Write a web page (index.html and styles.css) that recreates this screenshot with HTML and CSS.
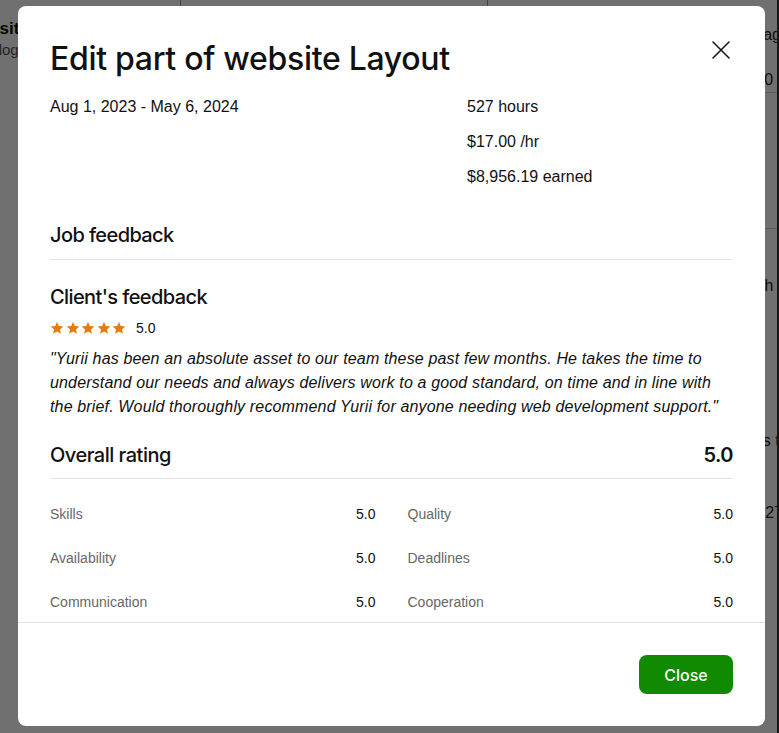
FILE: index.html
```html
<!DOCTYPE html>
<html lang="en">
<head>
<meta charset="utf-8">
<title>Edit part of website Layout</title>
<link rel="stylesheet" href="styles.css">
</head>
<body>
<div class="page">
  <div class="bg-left">
    <div class="bg-top"><span class="bg-tick t1"></span><span class="bg-tick t2"></span></div>
    <div class="bg-title">Website</div>
    <div class="bg-sub">Catalog</div>
  </div>
  <div class="bg-right">
    <div class="bg-item i1">Manage</div>
    <div class="bg-item i2">$0.00</div>
    <div class="bg-rule r1"></div>
    <div class="bg-rule r2"></div>
    <div class="bg-item i3">Each</div>
    <div class="bg-item i4">Hours total</div>
    <div class="bg-item i5">$1,27</div>
  </div>
  <div class="scrollbar"></div>
</div>

<div class="overlay">
  <div class="modal" role="dialog" aria-labelledby="modal-title">
    <div class="modal-body">
      <div class="modal-header">
        <h1 id="modal-title" class="title">Edit part of website Layout</h1>
        <button class="icon-close" aria-label="Close">
          <svg width="18" height="18" viewBox="0 0 18 18" fill="none" stroke="#1a1a1a" stroke-width="1.6" stroke-linecap="round"><path d="M1 1L17 17M17 1L1 17"/></svg>
        </button>
      </div>

      <div class="stats">
        <div class="dates">Aug 1, 2023 - May 6, 2024</div>
        <div class="figures">
          <div>527 hours</div>
          <div>$17.00 /hr</div>
          <div>$8,956.19 earned</div>
        </div>
      </div>

      <h2 class="section-title job divided">Job feedback</h2>

      <h3 class="section-title client">Client's feedback</h3>
      <div class="stars-row">
        <div class="stars">
          <svg width="14" height="14" viewBox="0 0 24 24"><path fill="#e8790f" d="M12 1.5l3.1 7.1 7.7.7-5.8 5.1 1.7 7.6L12 18l-6.7 4 1.7-7.6-5.8-5.1 7.7-.7z"/></svg>
          <svg width="14" height="14" viewBox="0 0 24 24"><path fill="#e8790f" d="M12 1.5l3.1 7.1 7.7.7-5.8 5.1 1.7 7.6L12 18l-6.7 4 1.7-7.6-5.8-5.1 7.7-.7z"/></svg>
          <svg width="14" height="14" viewBox="0 0 24 24"><path fill="#e8790f" d="M12 1.5l3.1 7.1 7.7.7-5.8 5.1 1.7 7.6L12 18l-6.7 4 1.7-7.6-5.8-5.1 7.7-.7z"/></svg>
          <svg width="14" height="14" viewBox="0 0 24 24"><path fill="#e8790f" d="M12 1.5l3.1 7.1 7.7.7-5.8 5.1 1.7 7.6L12 18l-6.7 4 1.7-7.6-5.8-5.1 7.7-.7z"/></svg>
          <svg width="14" height="14" viewBox="0 0 24 24"><path fill="#e8790f" d="M12 1.5l3.1 7.1 7.7.7-5.8 5.1 1.7 7.6L12 18l-6.7 4 1.7-7.6-5.8-5.1 7.7-.7z"/></svg>
        </div>
        <span class="score">5.0</span>
      </div>
      <p class="quote">"Yurii has been an absolute asset to our team these past few months. He takes the time to understand our needs and always delivers work to a good standard, on time and in line with the brief. Would thoroughly recommend Yurii for anyone needing web development support."</p>

      <div class="overall divided">
        <span>Overall rating</span>
        <span class="overall-score">5.0</span>
      </div>

      <div class="ratings">
        <div class="rating"><span class="label">Skills</span><span class="value">5.0</span></div>
        <div class="rating"><span class="label">Quality</span><span class="value">5.0</span></div>
        <div class="rating"><span class="label">Availability</span><span class="value">5.0</span></div>
        <div class="rating"><span class="label">Deadlines</span><span class="value">5.0</span></div>
        <div class="rating"><span class="label">Communication</span><span class="value">5.0</span></div>
        <div class="rating"><span class="label">Cooperation</span><span class="value">5.0</span></div>
      </div>
    </div>

    <div class="modal-footer">
      <button class="btn-close">Close</button>
    </div>
  </div>
</div>
</body>
</html>
```

FILE: styles.css
```css
* { box-sizing: border-box; }

html, body {
  margin: 0;
  height: 100%;
  overflow: hidden;
}

body {
  font-family: "Liberation Sans", Arial, sans-serif;
  color: #111;
  background: #fff;
}

/* background page (dimmed behind overlay) */
.page {
  position: relative;
  height: 100%;
  display: flex;
  justify-content: space-between;
}

.bg-left {
  width: 520px;
}

.bg-top {
  height: 14px;
  display: flex;
}

.bg-tick {
  display: block;
  height: 14px;
  border-left: 1px solid #999;
}

.t1 { margin-left: 180px; }
.t2 { margin-left: 306px; }

.bg-title {
  margin-top: 4px;
  font-size: 17px;
  font-weight: bold;
  line-height: 22px;
  color: #111;
  text-indent: -36px;
  white-space: nowrap;
}

.bg-sub {
  font-size: 15px;
  line-height: 20px;
  color: #555;
  text-indent: -33px;
  white-space: nowrap;
}

.bg-right {
  width: 14px;
  display: flex;
  flex-direction: column;
}

.bg-item {
  font-size: 16px;
  line-height: 20px;
  color: #222;
  white-space: nowrap;
}

.i1 { margin-top: 25px; text-indent: -33px; }
.i2 { margin-top: 25px; text-indent: -32px; }
.i3 { margin-top: 47px; text-indent: -28px; }
.i4 { margin-top: 135px; text-indent: -37px; }
.i5 { margin-top: 52px; text-indent: -22px; }

.bg-rule {
  height: 1px;
  background: #ccc;
  margin-left: -20px;
  width: 40px;
}

.r1 { margin-top: 2px; }
.r2 { margin-top: 135px; }

.scrollbar {
  position: absolute;
  top: 0;
  right: 0;
  width: 2px;
  height: 100%;
  background: #333;
}

.overlay {
  position: fixed;
  inset: 0;
  background: rgba(0, 0, 0, 0.56);
  display: flex;
  align-items: flex-start;
  justify-content: center;
  padding-top: 6px;
}

.modal {
  width: 747px;
  height: 720px;
  margin-left: 4px;
  background: #fff;
  border-radius: 8px;
  display: flex;
  flex-direction: column;
  overflow: hidden;
}

.modal-body {
  flex: 1;
  overflow: hidden;
  padding: 33px 32px 0;
}

.modal-header {
  position: relative;
}

.title {
  margin: 0;
  font-family: Inter, "Liberation Sans", sans-serif;
  font-size: 32px;
  line-height: 40px;
  font-weight: 500;
  letter-spacing: -0.3px;
  color: #111;
}

.icon-close {
  position: absolute;
  top: 2px;
  right: 3px;
  padding: 0;
  border: 0;
  background: none;
  width: 18px;
  height: 18px;
  display: flex;
}

.stats {
  margin-top: 16px;
  display: grid;
  grid-template-columns: 417px 1fr;
  font-size: 16px;
  line-height: 24px;
}

.figures {
  display: flex;
  flex-direction: column;
  gap: 11px;
}

.section-title {
  margin: 0;
  font-family: Inter, "Liberation Sans", sans-serif;
  font-size: 20px;
  line-height: 28px;
  font-weight: 500;
  letter-spacing: -0.6px;
  color: #111;
}

.divided {
  border-bottom: 1px solid #e4e4e4;
}

.job {
  margin-top: 32px;
  padding-bottom: 10px;
}

.client {
  margin-top: 23px;
}

.stars-row {
  margin-top: 7px;
  display: flex;
  align-items: center;
  gap: 10px;
  height: 20px;
}

.stars {
  display: flex;
  gap: 1.5px;
}

.stars svg { display: block; }

.score {
  font-size: 14px;
  color: #111;
}

.quote {
  margin: 9px 0 0;
  font-size: 16px;
  line-height: 24px;
  font-style: italic;
  letter-spacing: 0.15px;
  color: #111;
}

.overall {
  margin-top: 22px;
  padding-bottom: 9px;
  display: flex;
  justify-content: space-between;
  font-family: Inter, "Liberation Sans", sans-serif;
  font-size: 20px;
  line-height: 28px;
  font-weight: 500;
  letter-spacing: -0.5px;
}

.overall-score {
  font-weight: 600;
}

.ratings {
  margin-top: 25px;
  display: grid;
  grid-template-columns: 1fr 1fr;
  column-gap: 32px;
  row-gap: 24px;
}

.rating {
  display: flex;
  justify-content: space-between;
  font-size: 14px;
  line-height: 20px;
}

.label { color: #676767; }
.value { color: #111; }

.modal-footer {
  border-top: 1px solid #e4e4e4;
  padding: 32px;
  display: flex;
  justify-content: flex-end;
}

.btn-close {
  width: 94px;
  height: 39px;
  border: 0;
  border-radius: 8px;
  background: #108a00;
  color: #fff;
  font-family: Inter, "Liberation Sans", sans-serif;
  font-size: 16px;
  font-weight: 500;
}
```
